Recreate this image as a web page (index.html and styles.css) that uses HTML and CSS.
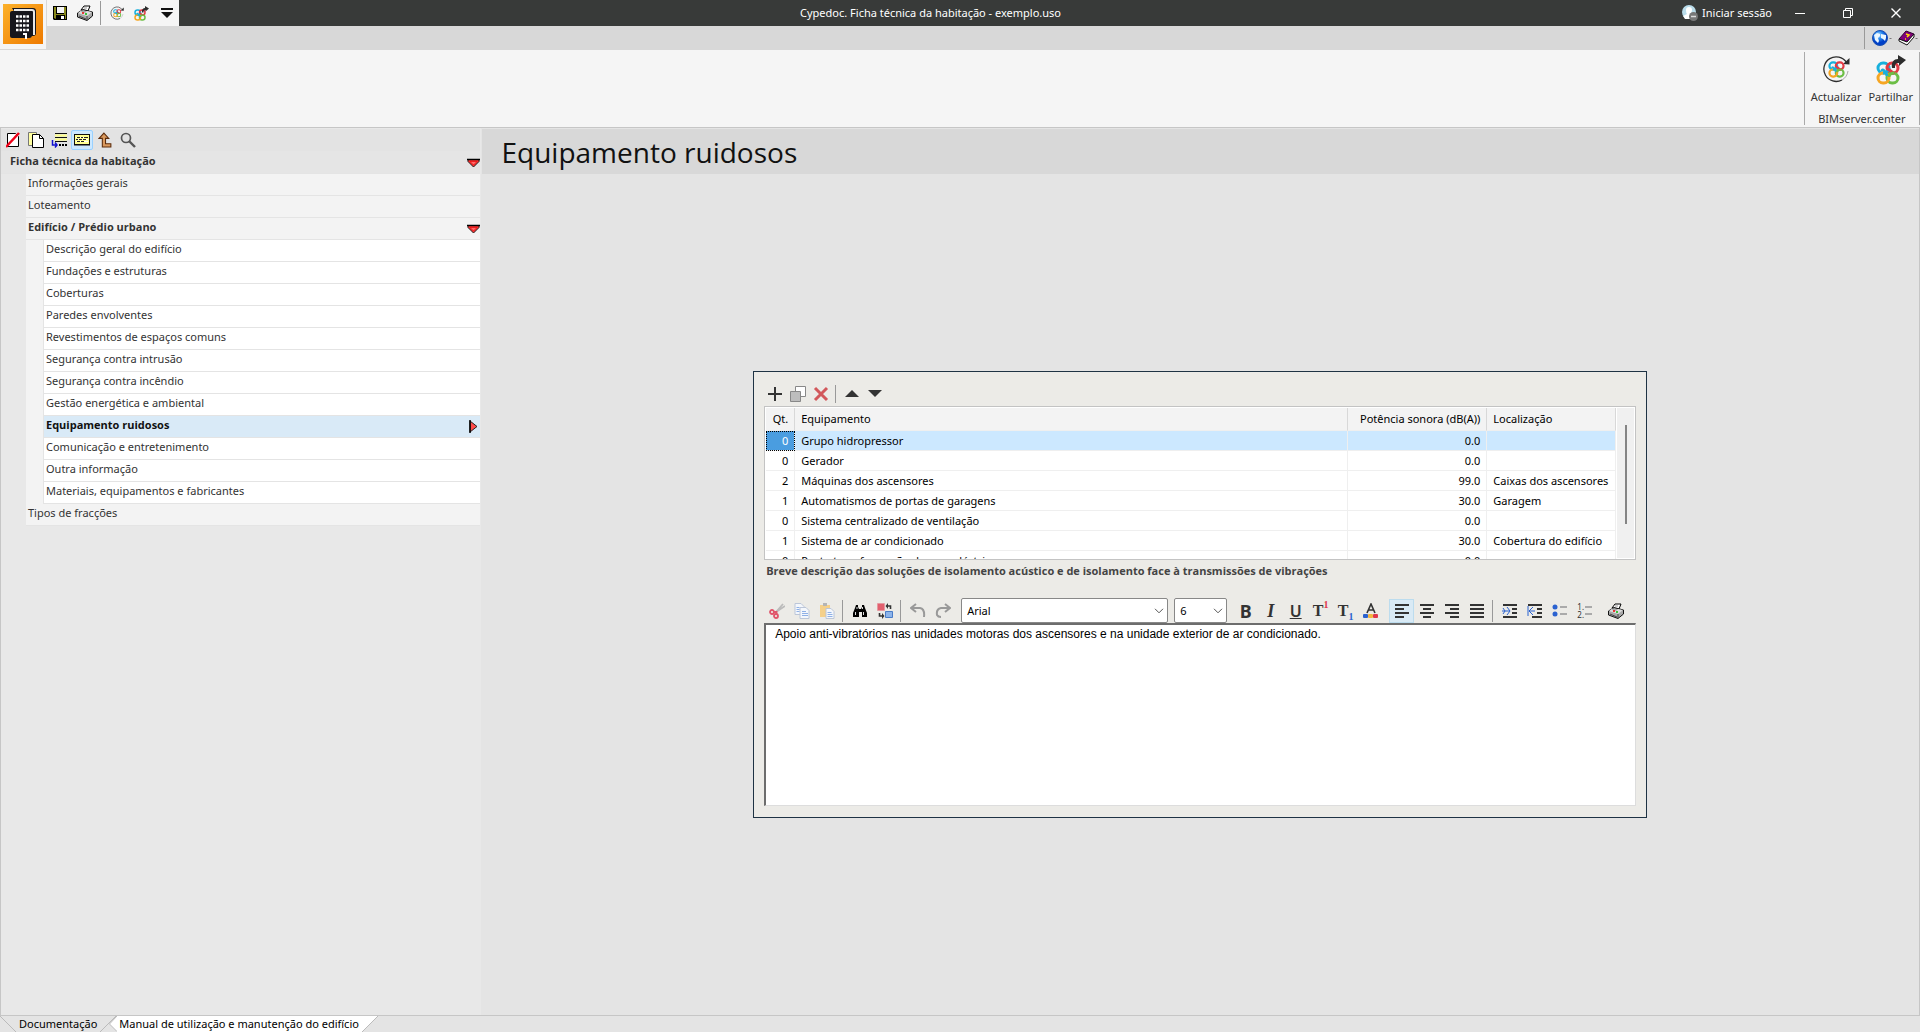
FILE: index.html
```html
<!DOCTYPE html>
<html lang="pt">
<head>
<meta charset="utf-8">
<title>Cypedoc. Ficha técnica da habitação - exemplo.uso</title>
<link rel="stylesheet" href="styles.css">
</head>
<body>
<svg class="defs" aria-hidden="true">
  <symbol id="knot" viewBox="0 0 24 24">
    <g fill="none" stroke-width="3">
      <rect x="2" y="2" width="11" height="10" rx="5" stroke="#18b0dc"/>
      <rect x="11" y="2" width="11" height="10" rx="5" stroke="#e23a44"/>
      <rect x="11" y="12" width="11" height="10" rx="5" stroke="#6cbe45"/>
      <rect x="2" y="12" width="11" height="10" rx="5" stroke="#f6a623"/>
      <path d="M6 10c0-3 5 2 5 5M13 7c0 3-4 5-6 5" stroke="#18b0dc"/>
      <path d="M11 8c2 0 5 3 7 5" stroke="#e23a44"/>
      <path d="M18 12c-3 0-5 2-5 4" stroke="#6cbe45"/>
    </g>
  </symbol>
  <symbol id="update" viewBox="0 0 28 28">
    <path d="M24.500 7.500A12.300 12.300 0 1 0 20 25" fill="none" stroke="#2d2d2d" stroke-width="1.300"/>
    <path d="M20 25a12.300 12.300 0 0 0 6-9" fill="none" stroke="#aaa"/>
    <path d="M21 9l6.500.500V3z" fill="#2d2d2d"/>
    <use href="#knot" x="6" y="6" width="17" height="17"/>
  </symbol>
  <symbol id="share" viewBox="0 0 30 30">
    <use href="#knot" x="0" y="6" width="24" height="24"/>
    <path d="M16 13c-1-6 2-9 6-9V0l8 5-7 6V8c-4 0-4 2-4 5z" fill="#2d2d2d"/>
  </symbol>
  <symbol id="printer" viewBox="0 0 16 16">
    <path d="M4 5l3-4 6 0-2 5z" fill="#fff" stroke="#000"/>
    <path d="M.5 8L6 4.500l9.500 2.500v4L10 15.500 .5 12z" fill="#a8a8a8" stroke="#111"/>
    <path d="M1 8l9 3 5-4-5-1-2 2-4-1 1-2z" fill="#ddd"/>
    <path d="M10 11v4M2 11l7 3" stroke="#444"/>
    <path d="M5 8h2" stroke="#e00" stroke-width="1.500"/><path d="M8 9h2" stroke="#0b0" stroke-width="1.500"/>
    <path d="M7 3h3" stroke="#999"/>
  </symbol>
  <symbol id="down" viewBox="0 0 13 10">
    <path d="M1 1.500h11v2L6.500 9 1 3.500z" fill="#f33" stroke="#222"/>
    <path d="M3 3.500h7L6.500 7z" fill="#ff6b6b" stroke="#e00000" stroke-width=".6"/>
    <path d="M0 1.500h13" stroke="#000" stroke-width="1.500"/>
  </symbol>
  <symbol id="chev" viewBox="0 0 10 6"><path d="M1 .8l4 4 4-4" fill="none" stroke="#555"/></symbol>
</svg>

<header class="top">
  <button class="app-button" aria-label="Menu">
    <svg width="40" height="40" viewBox="0 0 40 40">
      <defs><linearGradient id="org" x1="0" y1="0" x2="1" y2="1"><stop offset="0" stop-color="#fcb12a"/><stop offset="1" stop-color="#ee7a00"/></linearGradient></defs>
      <rect width="40" height="40" fill="url(#org)"/>
      <path d="M9 4h21q3 0 3 3v22q0 3-3 3h-4z" fill="#16161c"/>
      <path d="M11 6h18q2 0 2 2v23" fill="none" stroke="#e8e8e8" stroke-width="2"/>
      <path d="M9 7h17q3 0 3 3v21q0 3-3 3H9q-2 0-2-2V9q0-2 2-2z" fill="#16161c"/>
      <path d="M13 12.500h13M13 17h13M13 21.500h13M13 26h13" stroke="#fff" stroke-width="2.500" stroke-dasharray="2.500 1"/>
      <path d="M20 30h3v5" stroke="#fff" stroke-width="2" fill="none"/>
    </svg>
  </button>
  <div class="bars">
    <div class="titlebar">
      <div class="quick">
        <button aria-label="Guardar"><svg width="14" height="14" viewBox="0 0 14 14"><path d="M0 0h14v14H1L0 13z" fill="#000"/><path d="M1 1h2v7h8V1h2v12h-1V9H3v4L1 12z" fill="#8a8a1c"/><path d="M4 1h7v6H4z" fill="#f5f5f5"/><path d="M8 10h3v3H8z" fill="#fff"/></svg></button>
        <button aria-label="Imprimir"><svg width="16" height="16"><use href="#printer"/></svg></button>
        <span class="rule"></span>
        <button aria-label="Actualizar"><svg width="14" height="14"><use href="#update"/></svg></button>
        <button aria-label="Partilhar"><svg width="15" height="15"><use href="#share"/></svg></button>
        <button aria-label="Personalizar"><svg width="12" height="10" viewBox="0 0 12 10"><path d="M0 1h12" stroke="#111" stroke-width="2"/><path d="M0 4h12L6 10z" fill="#111"/></svg></button>
      </div>
      <h1 class="window-title">Cypedoc. Ficha técnica da habitação - exemplo.uso</h1>
      <div class="window-actions">
        <button class="session"><svg width="16" height="16" viewBox="0 0 16 16"><circle cx="7" cy="7" r="7" fill="#b9dcea"/><path d="M7 2a3 3 0 0 1 3 3q0 3-2 4l4 2-2 3H3l-2-3 4-2Q4 8 4 5a3 3 0 0 1 3-3z" fill="#fff"/><circle cx="11.500" cy="11.500" r="4.500" fill="#777"/><path d="M9 11.500h5" stroke="#ddd" stroke-width="1.500"/></svg>Iniciar sessão</button>
        <button class="win" aria-label="Minimizar"><svg width="10" height="10"><path d="M0 5.500h10" stroke="#fff"/></svg></button>
        <button class="win" aria-label="Restaurar"><svg width="10" height="10" fill="none" stroke="#fff"><path d="M.5 2.500h7v7h-7zM2.500 2.500v-2h7v7h-2"/></svg></button>
        <button class="win" aria-label="Fechar"><svg width="10" height="10"><path d="M.5 .5l9 9M9.500 .5l-9 9" stroke="#fff" stroke-width="1.400"/></svg></button>
      </div>
    </div>
    <div class="tabstrip">
      <div class="help">
        <button aria-label="Idioma"><svg width="20" height="16" viewBox="0 0 20 16"><defs><radialGradient id="gl" cx=".4" cy=".3"><stop offset="0" stop-color="#bfe4ff"/><stop offset=".5" stop-color="#2a8cf0"/><stop offset="1" stop-color="#0040c8"/></radialGradient></defs><circle cx="8" cy="8" r="7.500" fill="url(#gl)" stroke="#1a4fb0"/><path d="M2 5l3-2 3 1v2L6 8l1 3-1 2-3-3zM9 4l5 1v3l-1 3-2-2-2-1z" fill="#e9f6ff"/><path d="M17 8h3l-1 1h-1z" fill="#777"/></svg></button>
        <button aria-label="Ajuda"><svg width="20" height="16" viewBox="0 0 20 16"><path d="M1 9L8 1l8 3-7 8z" fill="#80007a" stroke="#300030"/><path d="M1 9l8 3 7-8v3l-7 8-8-4z" fill="#fff" stroke="#111"/><path d="M8 4l3 1-2 2M7 9l1 0" stroke="#fd0" stroke-width="1.500" fill="none"/><path d="M17 8h3l-1 1h-1z" fill="#777"/></svg></button>
      </div>
    </div>
  </div>
</header>

<section class="ribbon" aria-label="Friso">
  <div class="group">
    <div class="group-buttons">
      <button><svg width="28" height="28"><use href="#update"/></svg>Actualizar</button>
      <button><svg width="30" height="30"><use href="#share"/></svg>Partilhar</button>
    </div>
    <div class="group-name">BIMserver.center</div>
  </div>
</section>

<div class="workspace">
  <nav class="side">
    <div class="side-tools">
      <button aria-label="Limpar"><svg width="14" height="16" viewBox="0 0 14 16"><path d="M1.500 1.500h8l3 3v10h-11z" fill="#fff" stroke="#000"/><path d="M0 15L13 1" stroke="#f00018" stroke-width="2.500"/></svg></button>
      <button aria-label="Copiar"><svg width="16" height="16" viewBox="0 0 16 16"><path d="M.5 .5h8v13h-8z" fill="#ffffa0" stroke="#777"/><path d="M4.500 2.500h7l4 4v9h-11z" fill="#fff" stroke="#000"/><path d="M11.500 2.500v4h4" fill="none" stroke="#000"/></svg></button>
      <button aria-label="Importar"><svg width="16" height="16" viewBox="0 0 16 16"><path d="M4 1.500h12M4 5.500h12M4 9.500h12" stroke="#111"/><path d="M4 3.500h12M4 7.500h12" stroke="#ff8" stroke-width="2"/><path d="M1.500 8v5H6M4 10.500l2 2.500-2 2.500" stroke="#1010d0" fill="none" stroke-width="1.500"/><path d="M8 13h8" stroke="#000" stroke-width="2" stroke-dasharray="2 1"/></svg></button>
      <button class="on" aria-label="Ver descrição"><svg width="16" height="12" viewBox="0 0 16 12"><rect x=".5" y=".5" width="15" height="10" fill="#ffff90" stroke="#111"/><path d="M0 11h16" stroke="#111"/><path d="M2 3.500h12M2 5.500h12M2 7.500h12" stroke="#fff"/><path d="M3 3.500h3m1 0h2m1 0h4M2 5.500h2m1 0h3m1 0h3M3 7.500h3m1 0h3" stroke="#222"/></svg></button>
      <button aria-label="Subir"><svg width="14" height="16" viewBox="0 0 13 15"><path d="M5.500 1L10 6H7v5h5v3H4V6H1z" fill="#d9995e" stroke="#5c2c0c"/></svg></button>
      <button aria-label="Procurar"><svg width="16" height="16" viewBox="0 0 16 16"><circle cx="6" cy="6" r="4.500" fill="none" stroke="#555" stroke-width="1.700"/><path d="M9 9l6 6" stroke="#555" stroke-width="2.400"/></svg></button>
    </div>
    <a href="#" class="root">Ficha técnica da habitação<svg width="13" height="10"><use href="#down"/></svg></a>
    <ul class="level1">
      <li><a href="#">Informações gerais</a></li>
      <li><a href="#">Loteamento</a></li>
      <li><a href="#" class="strong">Edifício / Prédio urbano<svg width="13" height="10"><use href="#down"/></svg></a>
        <ul class="level2">
          <li><a href="#">Descrição geral do edifício</a></li>
          <li><a href="#">Fundações e estruturas</a></li>
          <li><a href="#">Coberturas</a></li>
          <li><a href="#">Paredes envolventes</a></li>
          <li><a href="#">Revestimentos de espaços comuns</a></li>
          <li><a href="#">Segurança contra intrusão</a></li>
          <li><a href="#">Segurança contra incêndio</a></li>
          <li><a href="#">Gestão energética e ambiental</a></li>
          <li><a href="#" class="current" aria-current="page">Equipamento ruidosos<svg width="13" height="13" viewBox="0 0 13 13"><path d="M3 1v11l7-5.500z" fill="#ff4c4c" stroke="#222"/><path d="M3 0v13" stroke="#000" stroke-width="1.500"/></svg></a></li>
          <li><a href="#">Comunicação e entretenimento</a></li>
          <li><a href="#">Outra informação</a></li>
          <li><a href="#">Materiais, equipamentos e fabricantes</a></li>
        </ul>
      </li>
      <li><a href="#">Tipos de fracções</a></li>
    </ul>
  </nav>

  <main class="page">
    <h2 class="page-title">Equipamento ruidosos</h2>
    <div class="canvas">
      <section class="panel">
        <div class="row-tools">
          <button aria-label="Adicionar"><svg width="16" height="16"><path d="M8 1v14M1 8h14" stroke="#333" stroke-width="2"/></svg></button>
          <button aria-label="Duplicar"><svg width="16" height="16"><path d="M5.500 .5h10v10h-10z" fill="#fff" stroke="#888"/><path d="M.5 5.500h10v10H.5z" fill="#bdbdbd" stroke="#888"/></svg></button>
          <button aria-label="Eliminar"><svg width="16" height="16"><path d="M2 2l12 12M14 2L2 14" stroke="#d2585b" stroke-width="3"/></svg></button>
          <span class="rule"></span>
          <button aria-label="Subir linha"><svg width="16" height="16"><path d="M1 11l7-7 7 7z" fill="#333"/></svg></button>
          <button aria-label="Descer linha"><svg width="16" height="16"><path d="M1 4l7 7 7-7z" fill="#333"/></svg></button>
        </div>
        <div class="grid">
          <table>
            <colgroup><col class="c-qty"><col><col class="c-power"><col class="c-place"></colgroup>
            <thead><tr><th class="num">Qt.</th><th>Equipamento</th><th class="num">Potência sonora (dB(A))</th><th>Localização</th></tr></thead>
            <tbody>
              <tr class="selected"><td class="num">0</td><td>Grupo hidropressor</td><td class="num">0.0</td><td></td></tr>
              <tr><td class="num">0</td><td>Gerador</td><td class="num">0.0</td><td></td></tr>
              <tr><td class="num">2</td><td>Máquinas dos ascensores</td><td class="num">99.0</td><td>Caixas dos ascensores</td></tr>
              <tr><td class="num">1</td><td>Automatismos de portas de garagens</td><td class="num">30.0</td><td>Garagem</td></tr>
              <tr><td class="num">0</td><td>Sistema centralizado de ventilação</td><td class="num">0.0</td><td></td></tr>
              <tr><td class="num">1</td><td>Sistema de ar condicionado</td><td class="num">30.0</td><td>Cobertura do edifício</td></tr>
              <tr><td class="num">0</td><td>Posto transformação de corr. eléctrica</td><td class="num">0.0</td><td></td></tr>
            </tbody>
          </table>
          <div class="track"><div class="thumb"></div></div>
        </div>
        <label class="caption" for="desc">Breve descrição das soluções de isolamento acústico e de isolamento face à transmissões de vibrações</label>
        <div class="format">
          <button aria-label="Cortar"><svg width="16" height="16" viewBox="0 0 16 16"><path d="M7 9l7-8M7 9l9-6" stroke="#bbb" stroke-width="1.800"/><circle cx="3" cy="9" r="2" fill="none" stroke="#e0566b" stroke-width="1.800"/><circle cx="7" cy="13" r="2" fill="none" stroke="#e0566b" stroke-width="1.800"/><path d="M4.500 9h3v2.500" fill="none" stroke="#e0566b" stroke-width="1.800"/></svg></button>
          <button aria-label="Copiar texto"><svg width="16" height="16" viewBox="0 0 16 16"><path d="M1 .5h6l3 3v8H1z" fill="#f4f7fc" stroke="#bcc6d8"/><path d="M6 4.500h6l3 3v8H6z" fill="#f4f7fc" stroke="#bcc6d8"/><path d="M2.500 4.500h3m-3 2h3m-3 2h3M8 8.500h4m-4 2h6m-6 2h6" stroke="#8fb0e6"/></svg></button>
          <button aria-label="Colar"><svg width="16" height="16" viewBox="0 0 16 16"><path d="M1 2h10v12H1z" fill="#f5d08a"/><path d="M4 0h4v3H4z" fill="#b5b5b5"/><path d="M7 5.500h5l3 3v7H7z" fill="#f4f7fc" stroke="#bcc6d8"/><path d="M8.500 9.500h4m-4 2h5m-5 2h5" stroke="#8fb0e6"/></svg></button>
          <span class="rule"></span>
          <button aria-label="Localizar"><svg width="16" height="16" viewBox="0 0 16 16"><path d="M4 2h2v2l1 2h2l1-2V2h2l1 3 2 5v4h-5V9H7v5H1v-4l2-5z" fill="#000"/><path d="M3.500 9v3M11.500 9v3M5 4v2M10.500 4v2" stroke="#ddd"/></svg></button>
          <button aria-label="Substituir"><svg width="16" height="16" viewBox="0 0 16 16"><path d="M.5 .5h7v7h-7z" fill="#e2606e" stroke="#e58b94" stroke-dasharray="1 1"/><path d="M8.500 8.500h7v6h-7z" fill="#8db4ea" stroke="#4a7cc8"/><path d="M10 3h3.500v3M6 13H2.500v-3" fill="none" stroke="#333" stroke-width="1.600"/><path d="M11 0v6L8.500 3zM5 10v6l2.500-3z" fill="#333"/></svg></button>
          <span class="rule"></span>
          <button aria-label="Anular"><svg width="16" height="16" viewBox="0 0 16 16"><path d="M6 1L1 5l5 4M1.500 5H10q5 1 4 9" fill="none" stroke="#999" stroke-width="2"/></svg></button>
          <button aria-label="Refazer"><svg width="16" height="16" viewBox="0 0 16 16"><path d="M10 1l5 4-5 4M14.500 5H6Q1 6 2 12q1 2 4 2" fill="none" stroke="#999" stroke-width="2"/></svg></button>
          <span class="combo font"><select aria-label="Tipo de letra"><option>Arial</option></select><svg width="10" height="6"><use href="#chev"/></svg></span>
          <span class="combo size"><select aria-label="Tamanho"><option>6</option></select><svg width="10" height="6"><use href="#chev"/></svg></span>
          <button class="b" aria-label="Negrito">B</button>
          <button class="i" aria-label="Itálico">I</button>
          <button class="u" aria-label="Sublinhado">U</button>
          <button class="t" aria-label="Expoente">T<sup>1</sup></button>
          <button class="t" aria-label="Índice">T<sub>1</sub></button>
          <button aria-label="Cor"><svg width="16" height="16" viewBox="0 0 16 16"><path d="M4 10L8 1l4 9M5.500 7h5" fill="none" stroke="#333" stroke-width="1.600"/><rect x="0" y="11" width="5" height="4" rx="1" fill="#2b62d0"/><rect x="5" y="11" width="5" height="4" rx="1" fill="#f4b63f"/><rect x="10" y="11" width="5" height="4" rx="1" fill="#e0364c"/></svg></button>
          <button class="pressed" aria-label="Alinhar à esquerda"><svg width="16" height="16" class="al"><path d="M1 2h14M1 6h9M1 10h14M1 14h9"/></svg></button>
          <button aria-label="Centrar"><svg width="16" height="16" class="al"><path d="M1 2h14M4 6h8M1 10h14M4 14h8"/></svg></button>
          <button aria-label="Alinhar à direita"><svg width="16" height="16" class="al"><path d="M1 2h14M6 6h9M1 10h14M6 14h9"/></svg></button>
          <button aria-label="Justificar"><svg width="16" height="16" class="al"><path d="M1 2h14M1 6h14M1 10h14M1 14h14"/></svg></button>
          <span class="rule"></span>
          <button aria-label="Aumentar avanço"><svg width="16" height="16" class="al"><path d="M1 2h14M10 6h5M10 10h5M1 14h14"/><path class="blue" d="M0 8h8M5 4l3 4-3 4M1 5l2 3-2 3"/></svg></button>
          <button aria-label="Diminuir avanço"><svg width="16" height="16" class="al"><path d="M1 2h14M10 6h5M10 10h5M5 14h10"/><path class="blue" d="M2 8h6M6 4L2 8l4 4M1 3v10"/></svg></button>
          <button aria-label="Marcas"><svg width="16" height="16"><circle cx="3" cy="4" r="2.500" fill="#2b62d0"/><circle cx="3" cy="11" r="2.500" fill="#2b62d0"/><path d="M8 4h7M8 11h7" stroke="#aaa" stroke-width="2"/></svg></button>
          <button class="ol" aria-label="Numeração"><span>1.<br>2.</span><svg width="8" height="16"><path d="M1 4h7M1 11h7" stroke="#aaa" stroke-width="2"/></svg></button>
          <button class="print" aria-label="Imprimir texto"><svg width="16" height="16"><use href="#printer"/></svg></button>
        </div>
        <textarea id="desc" spellcheck="false">Apoio anti-vibratórios nas unidades motoras dos ascensores e na unidade exterior de ar condicionado.</textarea>
      </section>
    </div>
  </main>
</div>

<footer class="sheets">
  <button class="sheet">
    <svg width="16" height="16"><path d="M0 0l16 16" stroke="#bbb"/></svg>
    <span>Documentação</span>
    <svg width="16" height="16"><path d="M16 0L0 16" stroke="#bbb"/></svg>
  </button>
  <button class="sheet active">
    <svg width="8" height="16"><path d="M8 0L.5 8 8 15.500" fill="#fff" stroke="#bbb"/></svg>
    <span>Manual de utilização e manutenção do edifício</span>
    <svg width="16" height="16"><path d="M0 0h16L0 16z" fill="#fff"/><path d="M16 0L0 16" stroke="#bbb"/></svg>
  </button>
</footer>
</body>
</html>
```
FILE: styles.css
```css
* { box-sizing: border-box; }
body {
  margin: 0;
  height: 100vh;
  display: flex;
  flex-direction: column;
  overflow: hidden;
  font: 11px/16px "Noto Sans", "Open Sans", sans-serif;
  color: #333;
  background: #e4e4e4;
}
button {
  margin: 0;
  padding: 0;
  border: 0;
  background: none;
  font: inherit;
  color: inherit;
  display: flex;
  align-items: center;
  justify-content: center;
}
a { color: inherit; text-decoration: none; }
ul { list-style: none; margin: 0; padding: 0; }
svg { display: block; flex: none; }
.defs { position: absolute; width: 0; height: 0; }
.rule { width: 1px; background: #999; flex: none; }

/* Title bar */
.top { display: flex; background: #d8d8d8; }
.app-button { width: 46px; height: 49px; padding-bottom: 1px; background: #f5f5f5; }
.bars { flex: 1; display: flex; flex-direction: column; padding-left: 1px; }
.titlebar { display: flex; height: 26px; background: #383a39; color: #fff; }
.quick { display: flex; align-items: center; background: #f5f5f5; }
.quick button { width: 25px; height: 26px; }
.quick .rule { height: 24px; margin: 0 3px; }
.window-title { flex: 1; margin: 0; font-size: 11px; font-weight: 400; line-height: 26px; text-align: center; }
.window-actions { display: flex; }
.session { gap: 4px; margin-right: 4px; }
.win { width: 48px; }
.tabstrip { height: 24px; display: flex; justify-content: flex-end; }
.help { display: flex; gap: 6px; margin: 1px 0; padding: 0 2px 0 7px; border-left: 1px solid #999; }

/* Ribbon */
.ribbon { height: 78px; flex: none; display: flex; justify-content: flex-end; background: #f5f5f5; border-bottom: 1px solid #c6c6c6; padding: 2px 0; }
.group { border: solid #aaa; border-width: 0 1px; padding: 3px 6px 0; display: flex; flex-direction: column; justify-content: space-between; }
.group-buttons { display: flex; gap: 7px; }
.group-buttons button { flex-direction: column; justify-content: space-between; height: 50px; }
.group-name { text-align: center; line-height: 12px; }

/* Document tree */
.workspace { flex: 1; min-height: 0; display: flex; border: solid #c6c6c6; border-width: 0 1px 1px; }
.side { width: 25%; padding-top: 1px; background: #e8e8e8; }
.side-tools { display: flex; align-items: center; gap: 1px; height: 22px; padding-left: 1px; background: #e3e3e3; margin-right: 1px; }
.side-tools button { width: 22px; height: 20px; }
.side-tools .on { background: #cce8ff; border: 1px solid #99d1ff; border-radius: 2px; }
.side a { display: flex; align-items: center; justify-content: space-between; height: 22px; padding: 0 0 4px 2px; border-bottom: 1px solid #e4e4e4; }
.side a svg { margin-top: 4px; }
.side .root { height: 23px; padding: 0 0 2px 9px; background: #e5e5e5; }
.side .root, .side .strong, .side .current, .caption { font-family: "Open Sans", "Noto Sans", sans-serif; font-weight: 700; }
.level1 { margin-left: 25px; background: #f3f3f3; }
.level2 { margin-left: 17px; border-left: 1px solid #e4e4e4; background: #fff; }
.side .current { background: #d9eaf7; color: #111; }
.side .root, .level1 { margin-right: 1px; }

/* Page */
.page { flex: 1; display: flex; flex-direction: column; padding-top: 1px; margin-left: 1px; }
.page-title { margin: 0; height: 45px; padding-left: 20px; background: #d8d8d8; font: 400 28px/46px "Open Sans", "Noto Sans", sans-serif; color: #111; }
.canvas { flex: 1; display: flex; align-items: center; justify-content: center; }
.panel { width: 62.2%; padding: 12px 10px 11px; border: 1px solid #1f3344; background: #ecebe7; }
.row-tools { display: flex; align-items: center; gap: 7px; height: 20px; margin-bottom: 2px; padding-left: 3px; }
.row-tools .rule { height: 18px; margin: 0 1px 0 -1px; }
.grid { display: flex; align-items: flex-start; height: 154px; border: 1px solid #c3c3c3; padding: 1px; background: #fff; overflow: hidden; color: #000; }
table { flex: 1; border-collapse: separate; border-spacing: 0; table-layout: fixed; }
.c-qty { width: 29px; }
.c-power { width: 139px; }
.c-place { width: 129px; }
th, td { height: 20px; padding: 0 6px; border: solid #efefef; border-width: 0 1px 1px 0; text-align: left; font-weight: 400; line-height: 16px; white-space: nowrap; }
th { height: 23px; background: #f3f3f3; border-right-color: #d8d8d8; }
.num { text-align: right; }
.selected td { background: #cce8ff; }
.selected td:first-child { background: #4a9de0; color: #fff; outline: 1px dotted #000; outline-offset: -1px; }
th:first-child { padding-left: 0; }
.track { align-self: stretch; width: 17px; background: #f0f0f0; display: flex; justify-content: center; padding-top: 17px; margin-left: 1px; }
.thumb { width: 2px; height: 99px; background: #858585; }
.caption { display: block; padding: 3px 2px 0; height: 38px; color: #444; }

/* Formatting bar */
.format { display: flex; align-items: center; height: 25px; color: #333; }
.format button { width: 25px; height: 24px; flex: none; font-size: 18px; line-height: 20px; }
.format .rule { height: 22px; margin: 0 4px 0 3px; }
.combo { position: relative; margin-left: 6px; height: 25px; }
.combo.font { width: 207px; }
.combo.size { width: 53px; margin-right: 6px; }
.combo svg { position: absolute; right: 4px; top: 10px; pointer-events: none; }
select { appearance: none; display: block; width: 100%; height: 25px; padding: 0 5px; border: 1px solid #888; border-radius: 2px; background: #fff; font: inherit; color: #000; }
.format .b { font-weight: 700; }
.format .i { font: italic 700 18px/20px "Liberation Serif", serif; }
.format .u { font-weight: 600; text-decoration: underline; font-size: 16px; }
.format .t { font: 700 16px/20px "Liberation Serif", serif; }
.t sup, .t sub { font-size: 10px; line-height: 12px; }
.t sup { color: #e0364c; align-self: flex-start; }
.t sub { color: #2b62d0; align-self: flex-end; }
.format .pressed { background: #d9eaf5; border: 1px solid #bcdcee; margin-left: 6px; }
.al { fill: none; stroke: #333; stroke-width: 2; }
.al .blue { stroke: #2b62d0; stroke-width: 1; }
.format .ol { font-size: 8px; line-height: 8px; }
.format .print { margin-left: 6px; }
textarea { display: block; width: 100%; height: 183px; padding: 1px 9px; resize: none; outline: 0; border: solid; border-width: 2px 1px 1px 2px; border-color: #6d6d6d #ddd #ddd #6d6d6d; background: #fff; color: #000; font: 12px/16px "Liberation Sans", Arial, sans-serif; }

/* Sheet tabs */
.sheets { flex: none; display: flex; height: 16px; background: #e4e4e4; color: #000; }
.sheet { height: 16px; gap: 3px; }
.sheet.active { gap: 0; margin-left: -7px; }
.sheet.active span { padding: 0 3px 0 2px; background: #fff; }
```
